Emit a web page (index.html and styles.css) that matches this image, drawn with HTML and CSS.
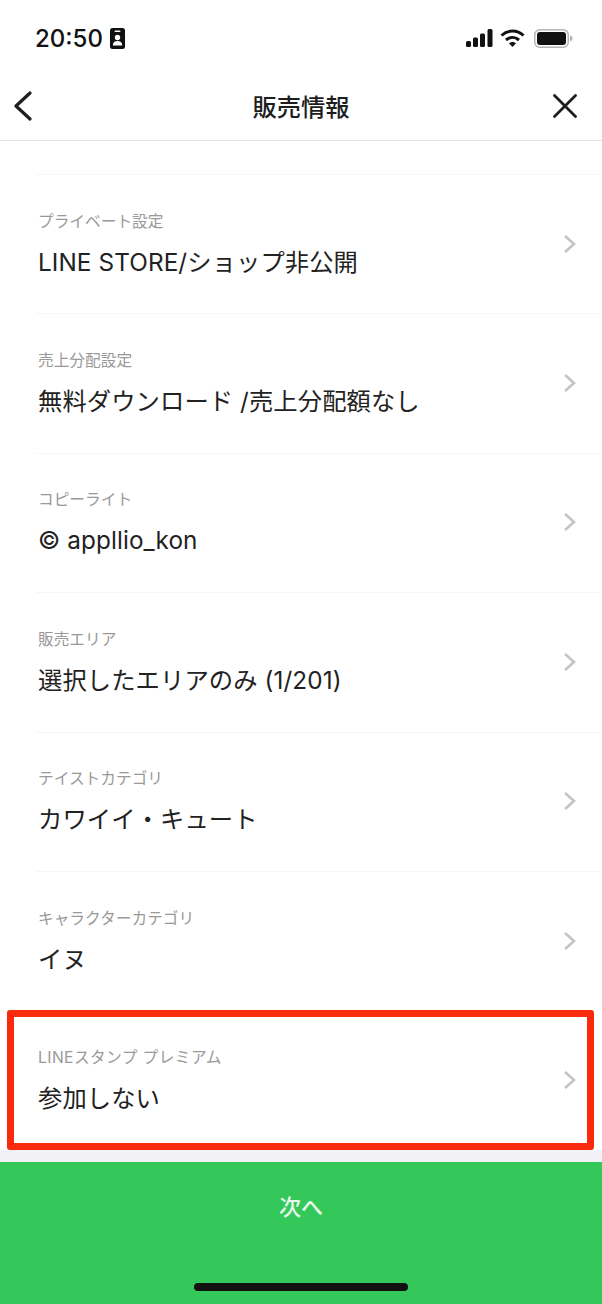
FILE: index.html
```html
<!DOCTYPE html>
<html lang="ja">
<head>
    <meta charset="utf-8">
    <title>販売情報</title>
    <link rel="stylesheet" href="styles.css">
</head>
<body>
    <div class="screen">
        <div class="status-bar">
            <div class="status-left">
                <span class="time">20:50</span>
                <svg class="id-icon" width="15" height="21" viewBox="0 0 15 21">
                    <rect x="0" y="0" width="15" height="21" rx="2.5" fill="#111"/>
                    <rect x="4.5" y="2.5" width="6" height="1.6" rx="0.8" fill="#fff"/>
                    <circle cx="7.5" cy="9.5" r="2.7" fill="#fff"/>
                    <path d="M2.8 17.5c0-3 2-4.4 4.7-4.4s4.700 1.400 4.700 4.400z" fill="#fff"/>
                </svg>
            </div>
            <div class="status-right">
                <svg width="27" height="18" viewBox="0 0 27 18">
                    <rect x="0" y="12" width="5" height="6" rx="1.5" fill="#111"/>
                    <rect x="7" y="8.5" width="5" height="9.5" rx="1.5" fill="#111"/>
                    <rect x="14" y="4.5" width="5" height="13.5" rx="1.5" fill="#111"/>
                    <rect x="21.5" y="0" width="5" height="18" rx="1.5" fill="#111"/>
                </svg>
                <svg width="25" height="18" viewBox="0 0 25 18">
                    <path d="M1.500 6.500C8 .6 17 .6 23.500 6.500" fill="none" stroke="#111" stroke-width="3"/>
                    <path d="M6 11c3.900-3.400 9.100-3.400 13 0" fill="none" stroke="#111" stroke-width="3"/>
                    <path d="M9 14.200c2.200-1.700 4.800-1.700 7 0l-3.500 3.800z" fill="#111"/>
                </svg>
                <svg class="battery" width="39" height="19" viewBox="0 0 39 19">
                    <rect x="0.750" y="0.750" width="33.500" height="17.500" rx="5" fill="none" stroke="#b5b5b5" stroke-width="1.500"/>
                    <rect x="3" y="3" width="29" height="13" rx="3" fill="#111"/>
                    <path d="M36 6.500c1.600.4 2.500 1.600 2.500 3s-.9 2.600-2.500 3z" fill="#b5b5b5"/>
                </svg>
            </div>
        </div>

        <header class="nav-bar">
            <svg class="nav-back" width="20" height="30" viewBox="0 0 20 30">
                <path d="M17 2 L3 15 L17 28" fill="none" stroke="#1e1e1e" stroke-width="3.200" stroke-linecap="round" stroke-linejoin="round"/>
            </svg>
            <h1 class="nav-title">販売情報</h1>
            <svg class="nav-close" width="24" height="24" viewBox="0 0 24 24">
                <path d="M1.500 1.500 L22.500 22.500 M22.500 1.500 L1.500 22.500" fill="none" stroke="#1e1e1e" stroke-width="2.800" stroke-linecap="round"/>
            </svg>
        </header>

        <main class="list">
            <div class="row">
                <div class="row-text">
                    <div class="row-label">プライベート設定</div>
                    <div class="row-value">LINE STORE/ショップ非公開</div>
                </div>
                <svg class="chevron" width="14" height="20" viewBox="0 0 14 20"><path d="M2 2 L11 10 L2 18" fill="none" stroke="#c4c4c4" stroke-width="2.600"/></svg>
            </div>
            <div class="row">
                <div class="row-text">
                    <div class="row-label">売上分配設定</div>
                    <div class="row-value">無料ダウンロード /売上分配額なし</div>
                </div>
                <svg class="chevron" width="14" height="20" viewBox="0 0 14 20"><path d="M2 2 L11 10 L2 18" fill="none" stroke="#c4c4c4" stroke-width="2.600"/></svg>
            </div>
            <div class="row">
                <div class="row-text">
                    <div class="row-label">コピーライト</div>
                    <div class="row-value">© appllio_kon</div>
                </div>
                <svg class="chevron" width="14" height="20" viewBox="0 0 14 20"><path d="M2 2 L11 10 L2 18" fill="none" stroke="#c4c4c4" stroke-width="2.600"/></svg>
            </div>
            <div class="row">
                <div class="row-text">
                    <div class="row-label">販売エリア</div>
                    <div class="row-value">選択したエリアのみ (1/201)</div>
                </div>
                <svg class="chevron" width="14" height="20" viewBox="0 0 14 20"><path d="M2 2 L11 10 L2 18" fill="none" stroke="#c4c4c4" stroke-width="2.600"/></svg>
            </div>
            <div class="row">
                <div class="row-text">
                    <div class="row-label">テイストカテゴリ</div>
                    <div class="row-value">カワイイ・キュート</div>
                </div>
                <svg class="chevron" width="14" height="20" viewBox="0 0 14 20"><path d="M2 2 L11 10 L2 18" fill="none" stroke="#c4c4c4" stroke-width="2.600"/></svg>
            </div>
            <div class="row">
                <div class="row-text">
                    <div class="row-label">キャラクターカテゴリ</div>
                    <div class="row-value">イヌ</div>
                </div>
                <svg class="chevron" width="14" height="20" viewBox="0 0 14 20"><path d="M2 2 L11 10 L2 18" fill="none" stroke="#c4c4c4" stroke-width="2.600"/></svg>
            </div>
            <div class="row row-marked">
                <div class="row-text">
                    <div class="row-label row-label-wide">LINEスタンプ プレミアム</div>
                    <div class="row-value">参加しない</div>
                </div>
                <svg class="chevron" width="14" height="20" viewBox="0 0 14 20"><path d="M2 2 L11 10 L2 18" fill="none" stroke="#c4c4c4" stroke-width="2.600"/></svg>
                <div class="red-frame"></div>
            </div>
        </main>

        <footer class="next-bar">
            <span class="next-label">次へ</span>
            <div class="home-indicator"></div>
        </footer>
    </div>
</body>
</html>
```

FILE: styles.css
```css
body {
    margin: 0;
    background-color: #fff;
    font-family: Inter, "Noto Sans CJK JP", sans-serif;
}

.screen {
    width: 602px;
    height: 1304px;
    display: flex;
    flex-direction: column;
    overflow: hidden;
}

.status-bar {
    height: 72px;
    flex: none;
    display: flex;
    justify-content: space-between;
    align-items: center;
    padding: 4px 29px 0 35px;
    box-sizing: border-box;
}

.status-left {
    display: flex;
    align-items: center;
    gap: 7px;
}

.status-right {
    display: flex;
    align-items: center;
    gap: 7px;
}

.battery {
    margin-left: 2px;
}

.time {
    font-size: 24px;
    font-weight: 500;
    color: #111;
}

.nav-bar {
    height: 68px;
    flex: none;
    display: grid;
    grid-template-columns: 1fr auto 1fr;
    align-items: center;
    padding: 0 25px;
    border-bottom: 1px solid #e2e2e2;
}

.nav-back {
    justify-self: start;
    margin-left: -12px;
}

.nav-close {
    justify-self: end;
}

.nav-title {
    margin: 0 0 2px;
    font-family: "Noto Sans CJK JP", sans-serif;
    font-size: 24.3px;
    font-weight: 500;
    color: #1e1e1e;
}

.list {
    flex: 1;
    padding-top: 33px;
    background: linear-gradient(#fff 33px, #f2f2f6 33px);
    display: flex;
    flex-direction: column;
}

.row {
    height: 139.4px;
    flex: none;
    position: relative;
    display: flex;
    justify-content: space-between;
    align-items: center;
    padding: 0 25px 0 38px;
    box-sizing: border-box;
    background-color: #fff;
}

.row::before {
    content: "";
    position: absolute;
    left: 36px;
    right: 0;
    top: 0;
    height: 1px;
    background-color: #f6f6f6;
}

.row-text {
    padding-top: 2px;
}

.row-label {
    font-size: 15.7px;
    line-height: 20px;
    color: #999;
    margin-bottom: 14px;
}

.row-label-wide {
    letter-spacing: 0.4px;
}

.row-value {
    font-size: 24.3px;
    letter-spacing: 0.1px;
    line-height: 32px;
    color: #222;
}

.row-marked::before {
    display: none;
}

.red-frame {
    position: absolute;
    left: 7px;
    right: 8px;
    top: 0;
    bottom: 0;
    border: 7px solid #fb2a0c;
    border-radius: 3px;
}

.next-bar {
    height: 142px;
    flex: none;
    position: relative;
    display: flex;
    justify-content: center;
    background-color: #34c759;
}

.next-label {
    margin-top: 27px;
    font-family: "Noto Sans CJK JP", sans-serif;
    font-size: 22px;
    font-weight: 500;
    line-height: 32px;
    color: #e6f8ea;
}

.home-indicator {
    position: absolute;
    left: 194px;
    bottom: 13px;
    width: 214px;
    height: 8px;
    border-radius: 4px;
    background-color: #111;
}
```
